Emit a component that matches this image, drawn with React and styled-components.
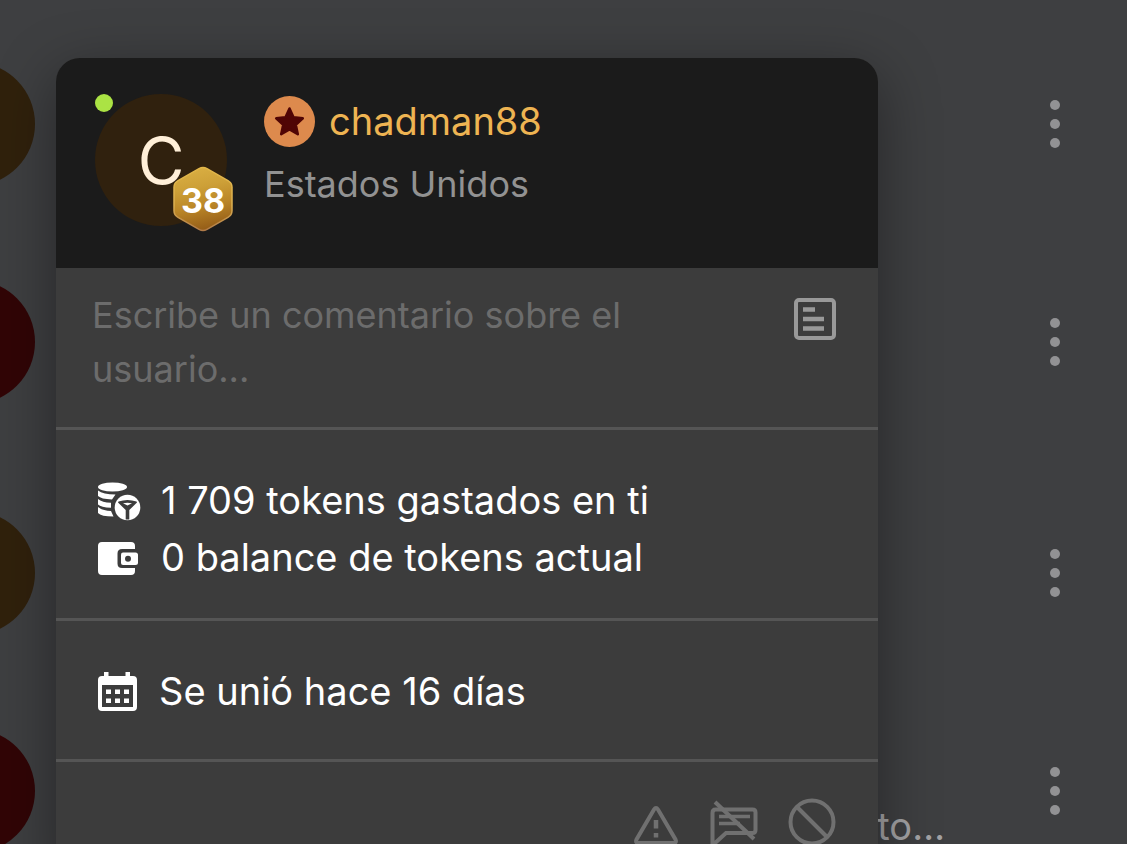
import React from "react";
import styled, { createGlobalStyle } from "styled-components";

const GlobalStyle = createGlobalStyle`
  *, *::before, *::after { box-sizing: border-box; }
  body {
    margin: 0;
    background: #3e3f41;
    font-family: Inter, "Liberation Sans", sans-serif;
    color: #fff;
  }
`;

const Page = styled.main`
  position: relative;
  height: 100vh;
  overflow: hidden;
`;

const ChatList = styled.ul`
  display: flex;
  flex-direction: column;
  gap: 13px;
  margin: 0;
  padding: 15px 0 0;
  list-style: none;
`;

const ChatGroup = styled.li`
  display: flex;
  flex-direction: column;
`;

const ChatRow = styled.div`
  display: flex;
  align-items: center;
  height: 218px;
  padding-right: 62px;
`;

const ChatAvatar = styled.div`
  flex: none;
  width: 124px;
  height: 124px;
  margin-left: -89px;
  border-radius: 50%;
  background: ${(p) => p.$color};
`;

const ChatPreview = styled.p`
  flex: 1;
  margin: 0;
  padding: 70px 100px 0 0;
  text-align: right;
  font-size: 38px;
  line-height: 48px;
  color: #a2a2a4;
`;

const MenuButton = styled.button`
  display: flex;
  flex-direction: column;
  gap: 9px;
  margin-left: auto;
  padding: 8px 0;
  width: 20px;
  align-items: center;
  border: 0;
  background: none;
`;

const Dot = styled.span`
  width: 10px;
  height: 10px;
  border-radius: 50%;
  background: #929294;
`;

const Card = styled.section`
  position: absolute;
  top: 58px;
  left: 56px;
  right: 249px;
  border-radius: 24px;
  background: #3c3c3c;
  box-shadow: 0 16px 60px rgba(0, 0, 0, 0.4);
`;

const CardHeader = styled.header`
  display: flex;
  gap: 37px;
  height: 210px;
  padding: 36px 39px;
  border-radius: 24px 24px 0 0;
  background: #1b1b1b;
`;

const Avatar = styled.div`
  position: relative;
  display: flex;
  align-items: center;
  justify-content: center;
  width: 132px;
  height: 132px;
  border-radius: 50%;
  background: #30210e;
  color: #ffefd8;
  font-size: 64px;
`;

const OnlineDot = styled.span`
  position: absolute;
  top: 0;
  left: 0;
  width: 18px;
  height: 18px;
  border-radius: 50%;
  background: #abe344;
`;

const Level = styled.span`
  position: absolute;
  right: -6px;
  bottom: -6px;
  display: grid;
  place-items: center;
  width: 60px;
  height: 66px;
  color: #fff;
  font-size: 34px;

  svg { grid-area: 1 / 1; }
`;

const LevelNumber = styled.span`
  grid-area: 1 / 1;
  z-index: 1;
  padding-top: 3px;
  font-weight: 700;
`;

const Identity = styled.div`
  display: flex;
  flex-direction: column;
  gap: 12px;
`;

const NameRow = styled.div`
  display: flex;
  align-items: center;
  gap: 14px;
  height: 54px;

  svg { flex: none; }
`;

const UserName = styled.h1`
  margin: 0;
  font-size: 38px;
  font-weight: 400;
  line-height: 54px;
  color: #eeb452;
`;

const Country = styled.p`
  margin: 0;
  font-size: 36px;
  line-height: 48px;
  color: #929292;
`;

const CommentSection = styled.div`
  display: flex;
  align-items: flex-start;
  justify-content: space-between;
  padding: 20px 42px 30px 36px;
  border-bottom: 3px solid #555;
`;

const CommentBox = styled.textarea`
  flex: 0 1 560px;
  min-width: 0;
  height: 109px;
  padding: 0;
  border: 0;
  outline: 0;
  resize: none;
  overflow: hidden;
  background: none;
  color: #fff;
  font-family: inherit;
  font-size: 36px;
  line-height: 54px;

  &::placeholder { color: #6c6c6c; opacity: 1; }
`;

const IconButton = styled.button`
  display: block;
  padding: 0;
  border: 0;
  background: none;
  color: ${(p) => p.$color};

  svg { display: block; }
`;

const NoteSlot = styled.div`
  padding-top: 10px;
`;

const Facts = styled.ul`
  margin: 0;
  padding: ${(p) => p.$padding};
  border-bottom: 3px solid #555;
  list-style: none;
`;

const Fact = styled.li`
  display: flex;
  align-items: center;
  gap: 20px;
  font-size: 38px;
  line-height: 57px;

  svg { flex: none; }
`;

const Actions = styled.footer`
  display: flex;
  justify-content: flex-end;
  gap: 30px;
  padding: 35px 42px;
`;

const HexBadge = () => (
  <svg width="60" height="66" viewBox="0 0 60 66" aria-hidden="true">
    <defs>
      <linearGradient id="gold" x1="0.4" y1="0" x2="0.6" y2="1">
        <stop offset="0" stopColor="#d9ae42" />
        <stop offset="0.3" stopColor="#cda038" />
        <stop offset="0.6" stopColor="#bb8728" />
        <stop offset="1" stopColor="#925a16" />
      </linearGradient>
      <linearGradient id="rim" x1="0" y1="0" x2="0" y2="1">
        <stop offset="0" stopColor="#e3b748" />
        <stop offset="0.6" stopColor="#dcb051" />
        <stop offset="1" stopColor="#b17b48" />
      </linearGradient>
    </defs>
    <path
      d="M26 2.7q4-2.2 8 0l21 12q4 2.300 4 6.600v23.400q0 4.300-4 6.600l-21 12q-4 2.200-8 0l-21-12q-4-2.300-4-6.600v-23.400q0-4.300 4-6.600z"
      fill="url(#gold)"
      stroke="url(#rim)"
      strokeWidth="1.500"
    />
  </svg>
);

const StarBadge = () => (
  <svg width="51" height="51" viewBox="0 0 51 51" aria-hidden="true">
    <circle cx="25.500" cy="25.500" r="25.500" fill="#dd8a4d" />
    <path
      d="M25.500 12.500l4 8.800 9.300 1-7 6.500 2 9.400-8.300-4.800-8.300 4.800 2-9.400-7-6.500 9.300-1z"
      fill="#500505"
      stroke="#500505"
      strokeWidth="2.500"
      strokeLinejoin="round"
    />
  </svg>
);

const NoteIcon = () => (
  <svg width="42" height="42" viewBox="0 0 42 42" aria-hidden="true">
    <rect x="2" y="2" width="38" height="38" rx="3" fill="none" stroke="currentColor" strokeWidth="4" />
    <path d="M9 11.500h12M9 21h21M9 30.500h21" stroke="currentColor" strokeWidth="4.500" />
  </svg>
);

const TokensIcon = () => (
  <svg width="44" height="40" viewBox="0 0 44 40" aria-hidden="true">
    <ellipse cx="15.500" cy="6" rx="14.500" ry="4.500" fill="#fff" />
    <path d="M1 9.500q5 4 17.500 4l-3.500 5Q4 18 1 15zM1 18q4 3.500 13 3.700v5Q4 26.500 1 23.500zM1 26q4 3.500 13 4l2.500 5.500Q4 35.500 1 32z" fill="#fff" />
    <circle cx="30.500" cy="26.500" r="12.800" fill="#fff" />
    <path
      d="M21.500 20.500q9-3 18 0l.5 1-7.700 7.500v9.500h-3.600V29L21 21.500zM26 22.200l4.500 2.300 4.500-2.300q-4.500-1-9 0z"
      fill="#3c3c3c"
      fillRule="evenodd"
    />
  </svg>
);

const WalletIcon = () => (
  <svg width="44" height="40" viewBox="0 0 44 40" aria-hidden="true">
    <path
      d="M5 4h29q4 0 4 4v3H25q-4.500 0-4.500 4.500v10q0 4.500 4.500 4.500h13v3q0 4-4 4H5q-4 0-4-4V8q0-4 4-4z"
      fill="#fff"
    />
    <path d="M26 14.500h12.500q2.500 0 2.500 2.500v7.500q0 2.500-2.500 2.500H26q-2 0-2-2v-8.500q0-2 2-2z" fill="#fff" />
    <circle cx="31" cy="20.700" r="3" fill="#3c3c3c" />
  </svg>
);

const CalendarIcon = () => (
  <svg width="42" height="42" viewBox="0 0 42 42" aria-hidden="true">
    <path
      fillRule="evenodd"
      d="M7 1h4.500v4h17V1H33v4h3q4 0 4 4v27q0 4-4 4H5q-4 0-4-4V9q0-4 4-4h2zM5 14v22h31V14z"
      fill="#fff"
    />
    <path d="M9 18.500h5v4.500H9zM18 18.500h5v4.500h-5zM27 18.500h5v4.500h-5zM9 27.500h5V32H9zM18 27.500h5V32h-5zM27 27.500h5V32h-5z" fill="#fff" />
  </svg>
);

const WarningIcon = () => (
  <svg width="48" height="50" viewBox="0 0 48 50" fill="none" stroke="currentColor" aria-hidden="true">
    <path d="M22 12.500q2-3 4 0l17.500 30q1.500 3.500-2 3.500h-35q-3.500 0-2-3.500z" strokeWidth="4" />
    <path d="M24 23v8.500M24 36v4.500" strokeWidth="4.500" />
  </svg>
);

const ChatOffIcon = () => (
  <svg width="48" height="50" viewBox="0 0 48 50" fill="none" stroke="currentColor" strokeWidth="4" aria-hidden="true">
    <path d="M2.500 47V16q0-3.500 3-3.500h37q3 0 3 3v17.500q0 3-3 3H16L4 47" />
    <path d="M9 19.500h31M9 26.500h21" strokeWidth="3.500" />
    <path d="M5 5l39 37" />
  </svg>
);

const BlockIcon = () => (
  <svg width="48" height="50" viewBox="0 0 48 50" fill="none" stroke="currentColor" strokeWidth="4" aria-hidden="true">
    <circle cx="24" cy="25" r="21.500" />
    <path d="M9 10l30 30" />
  </svg>
);

function Conversation({ color, preview }) {
  return (
    <ChatRow>
      <ChatAvatar $color={color} />
      {preview && <ChatPreview>{preview}</ChatPreview>}
      <MenuButton aria-label="Menú">
        <Dot />
        <Dot />
        <Dot />
      </MenuButton>
    </ChatRow>
  );
}

export default function App() {
  return (
    <>
      <GlobalStyle />
      <Page>
        <ChatList>
          <ChatGroup>
            <Conversation color="#30210c" />
            <Conversation color="#310506" />
          </ChatGroup>
          <ChatGroup>
            <Conversation color="#30210c" />
            <Conversation color="#310506" preview="to…" />
          </ChatGroup>
        </ChatList>

        <Card>
          <CardHeader>
            <Avatar>
              C
              <OnlineDot />
              <Level>
                <HexBadge />
                <LevelNumber>38</LevelNumber>
              </Level>
            </Avatar>
            <Identity>
              <NameRow>
                <StarBadge />
                <UserName>chadman88</UserName>
              </NameRow>
              <Country>Estados Unidos</Country>
            </Identity>
          </CardHeader>

          <CommentSection>
            <CommentBox aria-label="Comentario" placeholder="Escribe un comentario sobre el usuario..." />
            <NoteSlot>
              <IconButton $color="#999" aria-label="Guardar comentario">
                <NoteIcon />
              </IconButton>
            </NoteSlot>
          </CommentSection>

          <Facts $padding="42px 41px 32px">
            <Fact>
              <TokensIcon />
              <span>1 709 tokens gastados en ti</span>
            </Fact>
            <Fact>
              <WalletIcon />
              <span>0 balance de tokens actual</span>
            </Fact>
          </Facts>

          <Facts $padding="42px 41px 39px">
            <Fact>
              <CalendarIcon />
              <span>Se unió hace 16 días</span>
            </Fact>
          </Facts>

          <Actions>
            <IconButton $color="#707070" aria-label="Denunciar">
              <WarningIcon />
            </IconButton>
            <IconButton $color="#707070" aria-label="Silenciar">
              <ChatOffIcon />
            </IconButton>
            <IconButton $color="#707070" aria-label="Bloquear">
              <BlockIcon />
            </IconButton>
          </Actions>
        </Card>
      </Page>
    </>
  );
}
